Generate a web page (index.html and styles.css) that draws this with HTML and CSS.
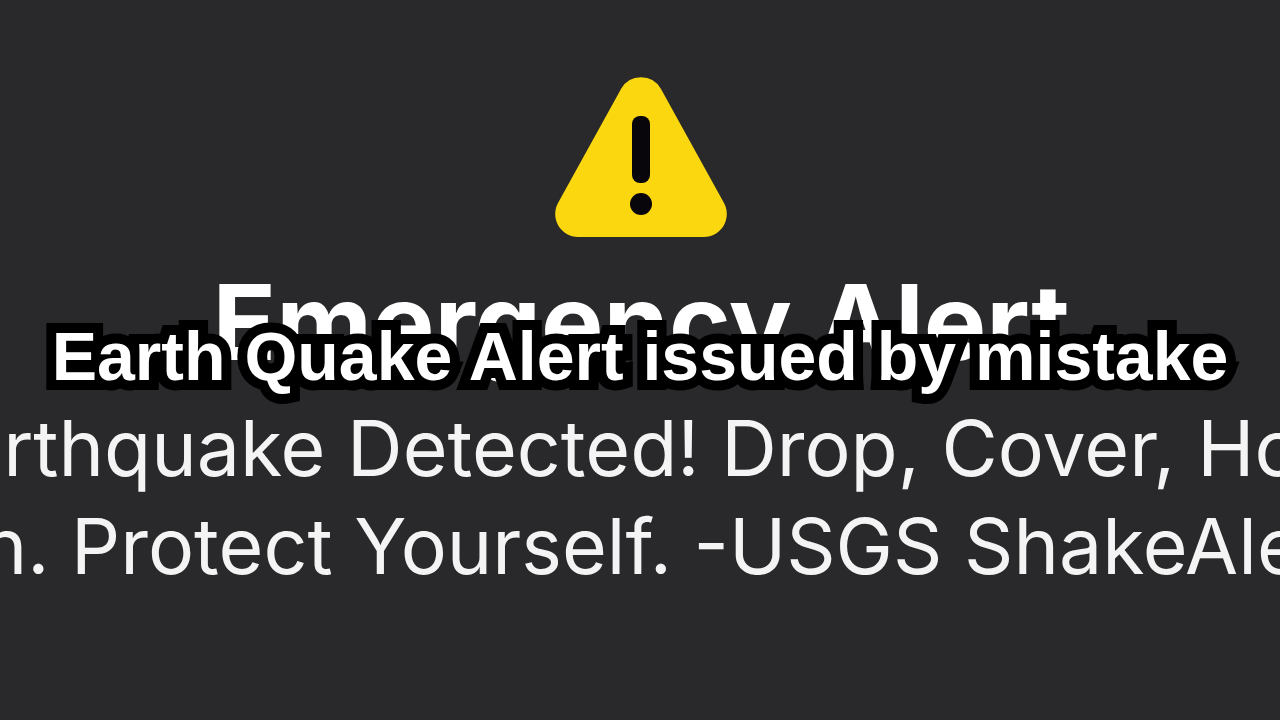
FILE: index.html
```html
<!DOCTYPE html>
<html lang="en">
<head>
    <meta charset="UTF-8">
    <meta name="viewport" content="width=device-width, initial-scale=1.0">
    <title>Emergency Alert</title>
    <link rel="stylesheet" href="styles.css">
</head>
<body>
    <main class="alert">
        <svg class="alert-icon" viewBox="0 0 172 160" aria-hidden="true">
            <path class="triangle" d="M66 12 A23 23 0 0 1 106 12 L169 126 A23 23 0 0 1 149 160 H23 A23 23 0 0 1 3 126 Z"/>
            <rect class="mark" x="77" y="39" width="18" height="67" rx="8"/>
            <circle class="mark" cx="86" cy="127" r="11"/>
        </svg>
        <h1 class="alert-title">Emergency Alert</h1>
        <p class="alert-message">
            <span class="line">Earthquake Detected! Drop, Cover, Hold</span>
            <span class="line">On. Protect Yourself. -USGS ShakeAlert</span>
        </p>
        <svg class="caption">
            <text x="50%" y="70">Earth Quake Alert issued by mistake</text>
        </svg>
    </main>
</body>
</html>
```

FILE: styles.css
```css
body {
    margin: 0;
    background-color: #29282b;
    color: #fff;
    font-family: Inter, sans-serif;
    overflow: hidden;
}
.alert {
    position: relative;
    display: flex;
    flex-direction: column;
    align-items: center;
    min-height: 100vh;
    padding-top: 77px;
    padding-left: 2px;
    box-sizing: border-box;
    text-align: center;
}
.alert-icon {
    width: 172px;
    height: 160px;
}
.triangle {
    fill: #fad70e;
}
.mark {
    fill: #08060a;
}
.alert-title {
    margin: 35px 0 0;
    font-size: 105px;
    line-height: 100px;
    font-weight: 700;
    white-space: nowrap;
}
.alert-message {
    margin: 27px 0 0;
    padding-right: 2px;
    color: #f4f4f4;
    font-size: 77px;
    line-height: 98px;
    white-space: nowrap;
}
.line {
    display: flex;
    justify-content: center;
}
/* headline lies across the alert title */
.caption {
    position: absolute;
    top: 50%;
    left: 0;
    width: 100%;
    height: 100px;
    margin-top: -50px;
}
.caption text {
    font-family: "Liberation Sans", Arial, sans-serif;
    font-size: 68px;
    font-weight: 700;
    text-anchor: middle;
    fill: #fff;
    stroke: #000;
    stroke-width: 20px;
    stroke-miterlimit: 3;
    paint-order: stroke fill;
}
```
